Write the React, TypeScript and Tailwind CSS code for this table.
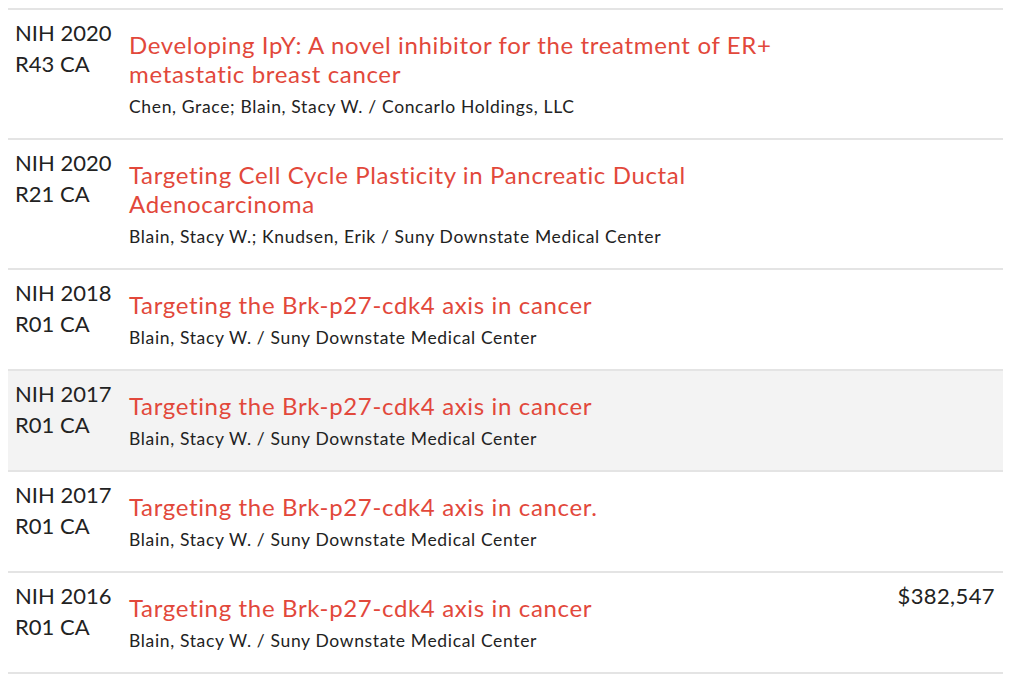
const grants = [
  {
    year: 'NIH 2020',
    code: 'R43 CA',
    title: 'Developing IpY: A novel inhibitor for the treatment of ER+ metastatic breast cancer',
    people: 'Chen, Grace; Blain, Stacy W. / Concarlo Holdings, LLC',
    amount: '',
  },
  {
    year: 'NIH 2020',
    code: 'R21 CA',
    title: 'Targeting Cell Cycle Plasticity in Pancreatic Ductal Adenocarcinoma',
    people: 'Blain, Stacy W.; Knudsen, Erik / Suny Downstate Medical Center',
    amount: '',
  },
  {
    year: 'NIH 2018',
    code: 'R01 CA',
    title: 'Targeting the Brk-p27-cdk4 axis in cancer',
    people: 'Blain, Stacy W. / Suny Downstate Medical Center',
    amount: '',
  },
  {
    year: 'NIH 2017',
    code: 'R01 CA',
    title: 'Targeting the Brk-p27-cdk4 axis in cancer',
    people: 'Blain, Stacy W. / Suny Downstate Medical Center',
    amount: '',
    shaded: true,
  },
  {
    year: 'NIH 2017',
    code: 'R01 CA',
    title: 'Targeting the Brk-p27-cdk4 axis in cancer.',
    people: 'Blain, Stacy W. / Suny Downstate Medical Center',
    amount: '',
  },
  {
    year: 'NIH 2016',
    code: 'R01 CA',
    title: 'Targeting the Brk-p27-cdk4 axis in cancer',
    people: 'Blain, Stacy W. / Suny Downstate Medical Center',
    amount: '$382,547',
  },
];

export default function App() {
  return (
    <div className="min-h-[675px] bg-white pt-[8px] pl-[8px] pr-[21px] font-['Lato','Liberation_Sans',sans-serif] text-[#222]">
      <div className="border-b-2 border-[#e4e4e4]">
        {grants.map((g, i) => (
          <div
            key={i}
            className={`flex border-t-2 border-[#e4e4e4] pt-[7px] pb-[18px] pl-[7px] pr-[8px] ${g.shaded ? 'bg-[#f3f3f3]' : ''}`}
          >
            <div className="w-[114px] shrink-0 text-[22px] leading-[31px]">
              <div>{g.year}</div>
              <div>{g.code}</div>
            </div>
            <div className="flex-1 pt-[13px]">
              <div className="max-w-[680px] text-[24px] leading-[29px] tracking-[0.65px] text-[#e2483b]">{g.title}</div>
              <div className="mt-[6px] text-[17.5px] leading-[26px] tracking-[0.65px]">{g.people}</div>
            </div>
            <div className="shrink-0 text-[22px] leading-[31px] tracking-[0.4px]">{g.amount}</div>
          </div>
        ))}
      </div>
    </div>
  );
}
